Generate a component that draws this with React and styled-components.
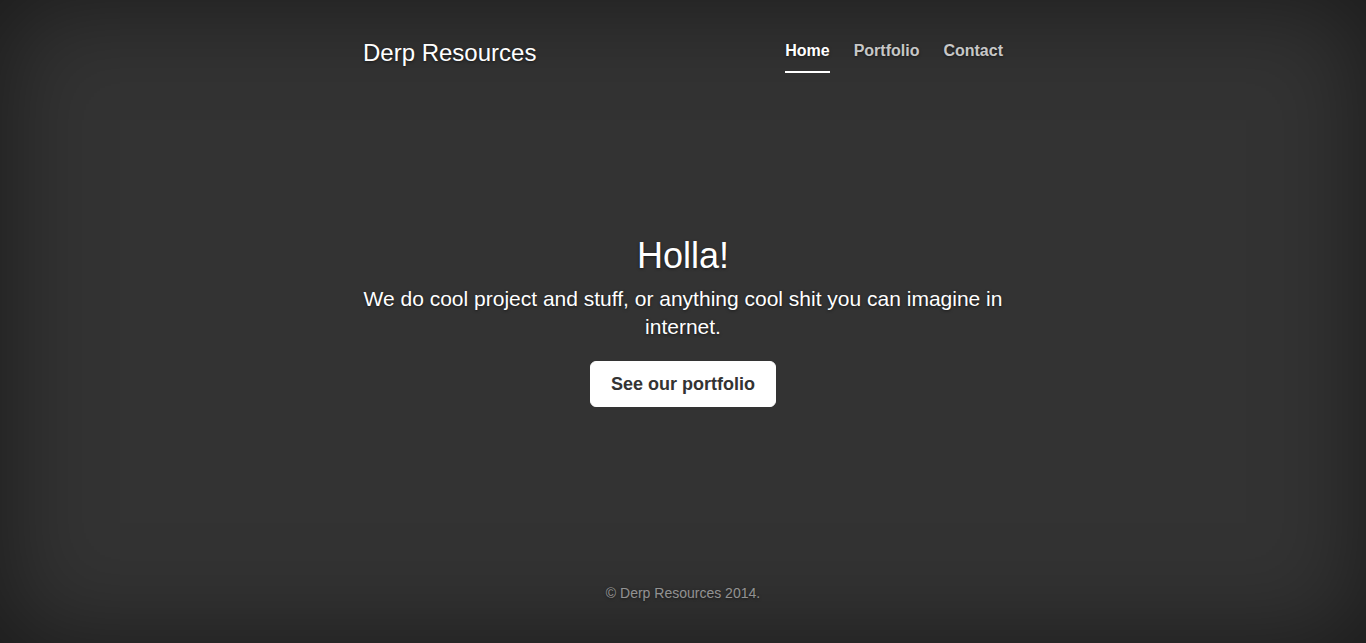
import React from "react";
import styled, { createGlobalStyle } from "styled-components";

const GlobalStyle = createGlobalStyle`
  html, body, #root {
    height: 100%;
    margin: 0;
  }
  body {
    background-color: #333;
    color: #fff;
    font-family: "Liberation Sans", Arial, sans-serif;
    text-shadow: 0 1px 3px rgba(0, 0, 0, 0.5);
    box-shadow: inset 0 0 100px rgba(0, 0, 0, 0.5);
  }
`;

const Wrapper = styled.div`
  display: flex;
  flex-direction: column;
  height: 100vh;
  width: 100%;
`;

const Masthead = styled.header`
  width: 640px;
  height: 106px;
  box-sizing: border-box;
  margin: 0 auto;
  padding: 30px 0 0;
  display: flex;
  justify-content: space-between;
  align-items: flex-start;
`;

const Brand = styled.h3`
  margin: 10px 0;
  font-size: 24px;
  font-weight: 500;
  line-height: 1.1;
`;

const Nav = styled.ul`
  list-style: none;
  margin: 1px 0 0;
  padding: 0;
  display: flex;
  gap: 24px;
`;

const NavLink = styled.a`
  display: block;
  padding: 10px 0;
  font-size: 16px;
  line-height: 20px;
  font-weight: bold;
  text-decoration: none;
  color: ${({ $active }) => ($active ? "#fff" : "rgba(255, 255, 255, 0.75)")};
  border-bottom: 2px solid ${({ $active }) => ($active ? "#fff" : "transparent")};
  cursor: pointer;
`;

const Cover = styled.main`
  flex: 1;
  width: 640px;
  margin: 0 auto;
  display: flex;
  flex-direction: column;
  align-items: center;
  justify-content: center;
  text-align: center;
`;

const Heading = styled.h1`
  margin: 0 0 10px;
  font-size: 36px;
  font-weight: 500;
  line-height: 1.1;
`;

const Lead = styled.p`
  margin: 0 0 20px;
  font-size: 21px;
  line-height: 28px;
`;

const Button = styled.a`
  display: inline-block;
  padding: 10px 20px;
  font-size: 18px;
  line-height: 24px;
  font-weight: bold;
  color: #333;
  background: #fff;
  border: 1px solid #fff;
  border-radius: 6px;
  text-shadow: none;
  text-decoration: none;
  cursor: pointer;
`;

const Footer = styled.footer`
  height: 106px;
  box-sizing: border-box;
  padding-top: 46px;
  text-align: center;
  font-size: 14px;
  line-height: 20px;
  color: rgba(255, 255, 255, 0.5);
`;

const links = ["Home", "Portfolio", "Contact"];

const App = () => {
  return (
    <>
      <GlobalStyle />
      <Wrapper>
        <Masthead>
          <Brand>Derp Resources</Brand>
          <Nav>
            {links.map((l, i) => (
              <li key={l}>
                <NavLink $active={i === 0}>{l}</NavLink>
              </li>
            ))}
          </Nav>
        </Masthead>
        <Cover>
          <Heading>Holla!</Heading>
          <Lead>
            We do cool project and stuff, or anything cool shit you can imagine in
            internet.
          </Lead>
          <Button>See our portfolio</Button>
        </Cover>
        <Footer>© Derp Resources 2014.</Footer>
      </Wrapper>
    </>
  );
};

export default App;
